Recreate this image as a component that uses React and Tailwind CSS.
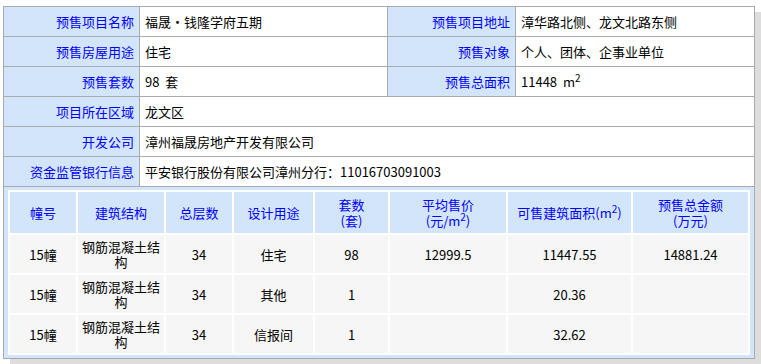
import React from 'react';

const LABEL = 'bg-[#d3e5fa] text-[#0000ff] flex items-center justify-end pr-[5px] border-r border-[#aaa]';
const VALUE = 'flex items-center pl-[5px] text-black';
const HEAD = 'h-[41px] bg-[#d3e5fa] text-[#0000ff] flex items-center justify-center text-center leading-[16px]';

const topRows = [
  [['预售项目名称', '福晟·钱隆学府五期'], ['预售项目地址', '漳华路北侧、龙文北路东侧']],
  [['预售房屋用途', '住宅'], ['预售对象', '个人、团体、企事业单位']],
  [['预售套数', '98  套'], ['预售总面积', 'AREA']],
  [['项目所在区域', '龙文区']],
  [['开发公司', '漳州福晟房地产开发有限公司']],
  [['资金监管银行信息', '平安银行股份有限公司漳州分行：11016703091003']],
];

const buildings = [
  ['15幢', '钢筋混凝土结构', '34', '住宅', '98', '12999.5', '11447.55', '14881.24'],
  ['15幢', '钢筋混凝土结构', '34', '其他', '1', '', '20.36', ''],
  ['15幢', '钢筋混凝土结构', '34', '信报间', '1', '', '32.62', ''],
];

function Value({ text }) {
  if (text === 'AREA') {
    return (
      <span className="whitespace-pre">
        11448  m<sup className="text-[10px]">2</sup>
      </span>
    );
  }
  return <span className="whitespace-pre">{text}</span>;
}

export default function App() {
  return (
    <div className="pt-[6px] pl-[3px] font-['Noto_Sans_CJK_SC',sans-serif] text-[13px] bg-white min-h-[364px]">
      <div className="w-[752px] border border-[#aaa] shadow-[7px_6px_0_#dddddd] bg-white">
        {topRows.map((row, i) => (
          <div key={i} className="flex h-[30px] border-b border-[#aaa]">
            <div className={`${LABEL} w-[136px]`}>{row[0][0]}</div>
            {row.length === 2 ? (
              <>
                <div className={`${VALUE} w-[248px] border-r border-[#aaa]`}>
                  <Value text={row[0][1]} />
                </div>
                <div className={`${LABEL} w-[128px]`}>{row[1][0]}</div>
                <div className={`${VALUE} flex-1`}>
                  <Value text={row[1][1]} />
                </div>
              </>
            ) : (
              <div className={`${VALUE} flex-1`}>
                <Value text={row[0][1]} />
              </div>
            )}
          </div>
        ))}

        {/* building detail table */}
        <div className="bg-[#d3e5fa] pt-[3px] pb-[3px] pl-[4px] pr-[4px]">
          <div className="grid grid-cols-[66px_86px_66px_79px_73px_116px_123px_115px] gap-[2px] p-[2px] bg-white leading-[15px]">
            <div className={HEAD}>幢号</div>
            <div className={HEAD}>建筑结构</div>
            <div className={HEAD}>总层数</div>
            <div className={HEAD}>设计用途</div>
            <div className={HEAD}>
              <div>套数<br />(套)</div>
            </div>
            <div className={HEAD}>
              <div>平均售价<br />(元/m<sup className="text-[10px]">2</sup>)</div>
            </div>
            <div className={HEAD}>
              <div>可售建筑面积(m<sup className="text-[10px]">2</sup>)</div>
            </div>
            <div className={HEAD}>
              <div>预售总金额<br />(万元)</div>
            </div>
            {buildings.map((b, i) =>
              b.map((cell, j) => (
                <div
                  key={`${i}-${j}`}
                  className="h-[38px] bg-[#f6f6f6] text-black flex items-center justify-center text-center"
                >
                  {cell}
                </div>
              ))
            )}
          </div>
        </div>
      </div>
    </div>
  );
}
